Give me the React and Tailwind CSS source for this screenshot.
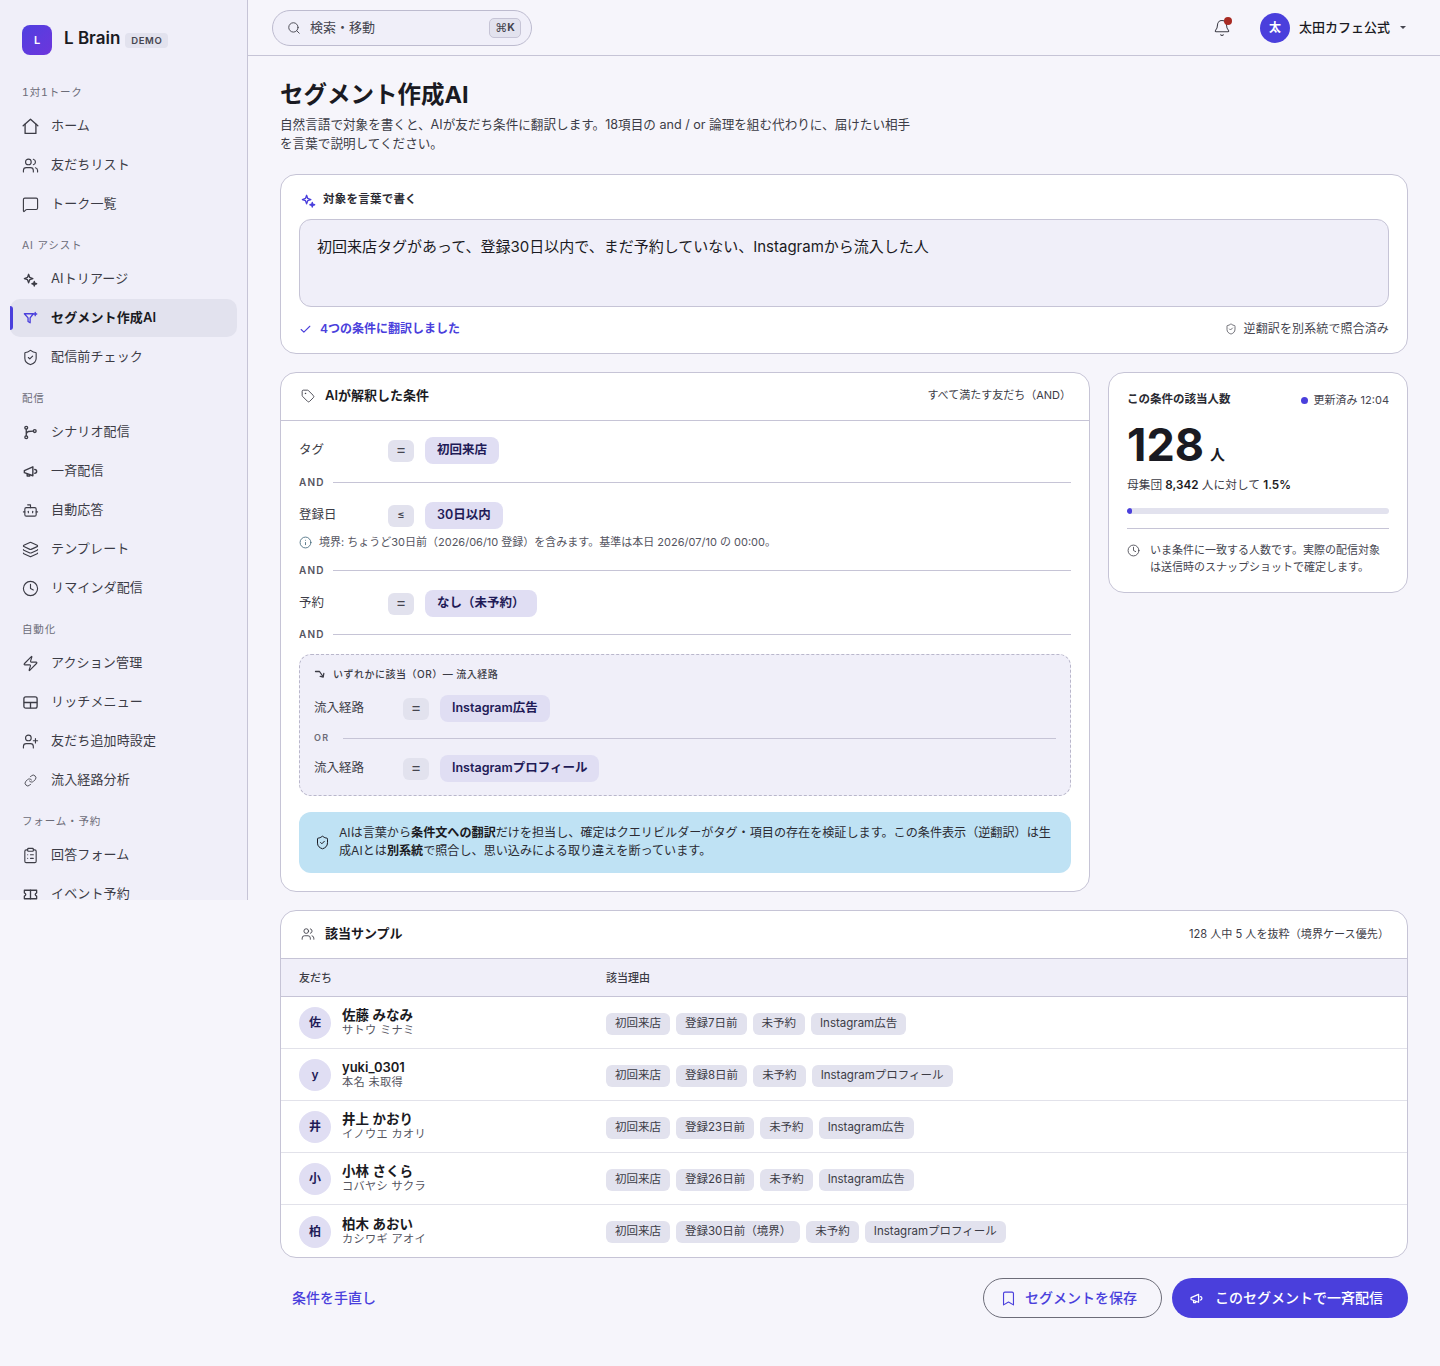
import React from 'react';
import {
  Users, MessageSquare, ShieldCheck, Bot, Layers, Clock, Zap, UserPlus, Link, ClipboardList,
  Search, Bell, Tag, Info, Check, Bookmark,
} from 'lucide-react';

const Home = ({ className }) => (
  <svg viewBox="1 1 22 22" className={className} fill="none" stroke="currentColor" strokeWidth="1.7" strokeLinecap="round" strokeLinejoin="round">
    <path d="M2.5 11 12 2.5 21.5 11" />
    <path d="M5 9V21H19V9" />
  </svg>
);

const Sparkle = ({ className }) => (
  <svg viewBox="-1 -1 18 18" className={className} fill="none" stroke="currentColor" strokeWidth="1.4" strokeLinejoin="round">
    <path d="M6 2.5 7.2 5.8 10.5 7 7.2 8.2 6 11.5 4.8 8.2 1.5 7 4.8 5.8Z" />
    <path d="M12 10 12.6 11.9 14.5 12.5 12.6 13.1 12 15 11.4 13.1 9.5 12.5 11.4 11.9Z" fill="currentColor" />
  </svg>
);

const FunnelSpark = ({ className }) => (
  <svg viewBox="-1 -1 18 18" className={className} fill="none" stroke="currentColor" strokeWidth="1.4" strokeLinejoin="round" strokeLinecap="round">
    <path d="M1.5 3H11L7.6 7.4V12.5L5.4 11.2V7.4Z" />
    <path d="M13 1.5V5M11.4 3.2H14.6" />
  </svg>
);

const Branch = ({ className }) => (
  <svg viewBox="-1 -1 18 18" className={className} fill="none" stroke="currentColor" strokeWidth="1.4" strokeLinecap="round">
    <circle cx="3.5" cy="3" r="1.5" />
    <circle cx="3.5" cy="13" r="1.5" />
    <circle cx="12.5" cy="6.5" r="1.5" />
    <path d="M3.5 4.5V11.5M11 6.5C7 6.5 3.5 6.5 3.5 10" />
  </svg>
);

const Megaphone = ({ className }) => (
  <svg viewBox="-1 -1 18 18" className={className} fill="none" stroke="currentColor" strokeWidth="1.5" strokeLinejoin="round" strokeLinecap="round">
    <path d="M1.5 7 10.5 3V12.5L1.5 9.2Z" />
    <path d="M4.5 10.3V12.8H7.2V11.4" />
    <path d="M12.5 5.8A2 2 0 0 1 12.5 9.8" />
  </svg>
);

const RichMenu = ({ className }) => (
  <svg viewBox="-1 -1 18 18" className={className} fill="none" stroke="currentColor" strokeWidth="1.4" strokeLinejoin="round">
    <rect x="1" y="2" width="14" height="12" rx="2" />
    <path d="M1 8H15M8 8V14" />
  </svg>
);

const Book = ({ className }) => (
  <svg viewBox="-1 -1 18 18" className={className} fill="none" stroke="currentColor" strokeWidth="1.4" strokeLinejoin="round" strokeLinecap="round">
    <path d="M1.5 3.5H14.5V6.2C13.5 6.6 13 7.2 13 8S13.5 9.4 14.5 9.8V12.5H1.5V9.8C2.5 9.4 3 8.8 3 8S2.5 6.6 1.5 6.2Z" />
    <path d="M8 3.5V12.5" />
  </svg>
);

const Turn = ({ className }) => (
  <svg viewBox="0 0 12 12" className={className} fill="none" stroke="currentColor" strokeWidth="1.3" strokeLinecap="round" strokeLinejoin="round">
    <path d="M1.5 3.5H5.5L9 8.5" />
    <path d="M9.8 5.5 9.2 9 6.2 8.4" />
  </svg>
);

const SmallLink = ({ className, strokeWidth }) => <Link className={`${className} p-[2px]`} strokeWidth={strokeWidth} />;

const nav = [
  { label: '1対1トーク', items: [['ホーム', Home], ['友だちリスト', Users], ['トーク一覧', MessageSquare]] },
  { label: 'AI アシスト', items: [['AIトリアージ', Sparkle], ['セグメント作成AI', FunnelSpark, true], ['配信前チェック', ShieldCheck]] },
  { label: '配信', items: [['シナリオ配信', Branch], ['一斉配信', Megaphone], ['自動応答', Bot], ['テンプレート', Layers], ['リマインダ配信', Clock]] },
  { label: '自動化', items: [['アクション管理', Zap], ['リッチメニュー', RichMenu], ['友だち追加時設定', UserPlus], ['流入経路分析', SmallLink]] },
  { label: 'フォーム・予約', items: [['回答フォーム', ClipboardList], ['イベント予約', Book]] },
];

const samples = [
  { init: '佐', name: '佐藤 みなみ', sub: 'サトウ ミナミ', tags: ['初回来店', '登録7日前', '未予約', 'Instagram広告'] },
  { init: 'y', name: 'yuki_0301', sub: '本名 未取得', tags: ['初回来店', '登録8日前', '未予約', 'Instagramプロフィール'], latin: true },
  { init: '井', name: '井上 かおり', sub: 'イノウエ カオリ', tags: ['初回来店', '登録23日前', '未予約', 'Instagram広告'] },
  { init: '小', name: '小林 さくら', sub: 'コバヤシ サクラ', tags: ['初回来店', '登録26日前', '未予約', 'Instagram広告'] },
  { init: '柏', name: '柏木 あおい', sub: 'カシワギ アオイ', tags: ['初回来店', '登録30日前（境界）', '未予約', 'Instagramプロフィール'] },
];

const Sidebar = () => (
  <aside className="w-[248px] h-[900px] shrink-0 overflow-hidden bg-[#f0eff9] border-r border-[#c6c4d6] pl-[10px] pr-[10px]">
    <div className="flex items-center h-[80px] -mb-[1px] pl-[12px]">
      <div className="w-[30px] h-[30px] rounded-lg bg-gradient-to-br from-[#4f3fe0] to-[#6d35dc] flex items-center justify-center text-white text-[11px] font-semibold">L</div>
      <span className="ml-[12px] mb-[2px] text-[17px] font-semibold text-[#1a1a22]">L Brain</span>
      <span className="ml-[5px] mt-[1px] px-[6px] h-[15px] leading-[15px] rounded bg-[#e2e2ee] text-[9.5px] font-semibold tracking-[0.06em] text-[#45454f]">DEMO</span>
    </div>
    {nav.map((sec) => (
      <div key={sec.label} className="mb-[9px]">
        <div className="h-[28px] pl-[12px] flex items-center text-[10.5px] tracking-[0.08em] tabular-nums text-[#6c6c78]">{sec.label}</div>
        <div className="flex flex-col gap-px">
          {sec.items.map(([label, Icon, active]) => (
            <div
              key={label}
              className={
                active
                  ? 'relative h-[38px] rounded-[10px] bg-[#e2e2ee] pl-[12px] w-[227px] flex items-center gap-[12px] text-[13px] font-semibold text-[#1a1a22]'
                  : 'relative h-[38px] pl-[12px] w-[227px] flex items-center gap-[12px] text-[13px] text-[#3c3c46]'
              }
            >
              {active && <span className="absolute left-0 top-[7px] w-[3px] h-[24px] rounded-r bg-[#4a3fdc]" />}
              <Icon className={active ? 'w-[17px] h-[17px] text-[#4a3fdc]' : 'w-[17px] h-[17px] text-[#3c3c46]'} strokeWidth={1.6} />
              <span className="tracking-[0.01em]">{label}</span>
            </div>
          ))}
        </div>
      </div>
    ))}
  </aside>
);

const Topbar = () => (
  <header className="h-[56px] border-b border-[#c6c4d6] flex items-center justify-between pl-[24px] pr-[34px]">
    <div className="w-[260px] h-[36px] rounded-full bg-[#f0eff9] border border-[#bdbbcf] flex items-center pl-[14px] pr-[10px]">
      <Search className="w-[14px] h-[14px] text-[#45454f]" strokeWidth={1.6} />
      <span className="ml-[9px] text-[13px] text-[#45454f]">検索・移動</span>
      <span className="ml-auto w-[32px] h-[20px] rounded-[5px] bg-[#e2e2ee] border border-[#c6c4d6] flex items-center justify-center text-[10.5px] text-[#45454f]">
        <span className="font-normal text-[12px]" style={{ fontFamily: '"DejaVu Sans", sans-serif' }}>⌘</span>
        <span className="font-bold">K</span>
      </span>
    </div>
    <div className="flex items-center">
      <div className="relative w-[20px] h-[20px] flex items-center justify-center">
        <Bell className="w-[18px] h-[18px] text-[#3c3c46]" strokeWidth={1.4} />
        <span className="absolute top-[-1px] right-0 w-[8px] h-[8px] rounded-full bg-[#a82a22]" />
      </div>
      <div className="ml-[28px] w-[30px] h-[30px] rounded-full bg-[#4a3fdc] flex items-center justify-center text-white text-[12px] font-semibold">太</div>
      <span className="ml-[9px] text-[13px] font-medium text-[#1a1a22]">太田カフェ公式</span>
      <span className="ml-[10px] w-0 h-0 border-x-[3px] border-x-transparent border-t-[3px] border-t-[#45454f]" />
    </div>
  </header>
);

const Op = ({ children }) => (
  <span className={children === '=' ? 'w-[26px] h-[22px] pb-[4px] rounded-md bg-[#e2e2ee] flex items-center justify-center text-[16px] text-[#45454f]' : 'w-[26px] h-[22px] pb-[2px] rounded-md bg-[#e2e2ee] flex items-center justify-center text-[11px] font-medium text-[#45454f]'}>{children}</span>
);

const Val = ({ children }) => (
  <span className="h-[27px] px-[12px] rounded-lg bg-[#e0def3] flex items-center text-[12.5px] font-semibold text-[#1f1b57]">{children}</span>
);

const Sep = ({ label, small }) => (
  <div className="flex items-center h-[14px]">
    <span className={small ? 'text-[9px] font-semibold tracking-[0.14em] text-[#6c6c78] w-[29px]' : 'text-[10px] font-semibold tracking-[0.12em] text-[#55555f] w-[34px]'}>{label}</span>
    <span className="flex-1 h-px bg-[#c6c4d6]" />
  </div>
);

const Cond = ({ name, op, val }) => (
  <div className="flex items-center h-[29px]">
    <span className="w-[89px] text-[12.5px] text-[#3c3c46]">{name}</span>
    <Op>{op}</Op>
    <span className="ml-[11px]"><Val>{val}</Val></span>
  </div>
);

const Conditions = () => (
  <section className="w-[810px] h-[520px] bg-white border border-[#c6c4d6] rounded-2xl overflow-hidden">
    <div className="h-[48px] border-b border-[#c6c4d6] flex items-center justify-between pl-[20px] pr-[18px]">
      <div className="flex items-center gap-[10px] pb-[2px]">
        <Tag className="w-[14px] h-[14px] text-[#3c3c46]" strokeWidth={1.5} />
        <span className="text-[13px] font-semibold text-[#1a1a22]">AIが解釈した条件</span>
      </div>
      <span className="text-[11px] pb-[2px] text-[#3c3c46]">すべて満たす友だち（AND）</span>
    </div>
    <div className="px-[18px] pt-[15px]">
      <Cond name="タグ" op="=" val="初回来店" />
      <div className="mt-[10px]"><Sep label="AND" /></div>
      <div className="mt-[12px]"><Cond name="登録日" op="≤" val="30日以内" /></div>
      <div className="mt-[5px] flex items-center gap-[7px] h-[14px] text-[11px] text-[#55555f]">
        <Info className="w-[13px] h-[13px] text-[#3d6477]" strokeWidth={1.5} />
        <span>境界: ちょうど30日前（2026/06/10 登録）を含みます。基準は本日 2026/07/10 の 00:00。</span>
      </div>
      <div className="mt-[14px]"><Sep label="AND" /></div>
      <div className="mt-[12px]"><Cond name="予約" op="=" val="なし（未予約）" /></div>
      <div className="mt-[9px]"><Sep label="AND" /></div>
      <div className="mt-[13px] h-[142px] rounded-xl border border-dashed border-[#b9b7cb] bg-[#f0eff9] px-[14px] pt-[12px]">
        <div className="flex items-center gap-[7px] h-[14px] text-[10px] font-medium tracking-[0.05em] text-[#3c3c46]">
          <Turn className="w-[12px] h-[12px]" />
          <span>いずれかに該当（OR）— 流入経路</span>
        </div>
        <div className="mt-[13px]"><Cond name="流入経路" op="=" val="Instagram広告" /></div>
        <div className="mt-[8px]"><Sep label="OR" small /></div>
        <div className="mt-[9px]"><Cond name="流入経路" op="=" val="Instagramプロフィール" /></div>
      </div>
      <div className="mt-[16px] h-[61px] rounded-xl bg-[#bfe2f4] pl-[16px] pr-[16px] flex items-center gap-[9px]">
        <ShieldCheck className="w-[15px] h-[15px] shrink-0 text-[#1a1a22]" strokeWidth={1.6} />
        <p className="text-[12.1px] leading-[18px] pb-[2px] text-[#2b2b33]">
          AIは言葉から<b className="font-semibold text-[#1a1a22]">条件文への翻訳</b>だけを担当し、確定はクエリビルダーがタグ・項目の存在を検証します。この条件表示（逆翻訳）は生成AIとは<b className="font-semibold text-[#1a1a22]">別系統</b>で照合し、思い込みによる取り違えを断っています。
        </p>
      </div>
    </div>
  </section>
);

const Count = () => (
  <aside className="w-[300px] h-[221px] bg-white border border-[#c6c4d6] rounded-2xl px-[18px] pt-[19px]">
    <div className="flex items-center justify-between h-[16px]">
      <span className="text-[11.5px] font-semibold text-[#2b2b33]">この条件の該当人数</span>
      <span className="flex items-center text-[11px] text-[#45454f]">
        <span className="w-[7px] h-[7px] rounded-full bg-[#4a3fdc] mr-[6px]" />
        更新済み 12:04
      </span>
    </div>
    <div className="mt-[14px] flex items-end h-[46px]">
      <span className="text-[45px] leading-[46px] font-bold text-[#1a1a22]">128</span>
      <span className="ml-[6px] mb-[2px] text-[15px] font-semibold text-[#1a1a22]">人</span>
    </div>
    <p className="mt-[9px] text-[11.7px] text-[#3c3c46] h-[16px] leading-[16px]">
      母集団 <b className="font-semibold text-[#1a1a22]">8,342</b> 人に対して <b className="font-semibold text-[#1a1a22]">1.5%</b>
    </p>
    <div className="mt-[15px] h-[6px] rounded-full bg-[#e2e2ee] overflow-hidden">
      <div className="h-full rounded-full bg-[#4a3fdc]" style={{ width: '1.5%', minWidth: 5 }} />
    </div>
    <div className="mt-[14px] border-t border-[#c6c4d6] pt-[13px] flex gap-[10px]">
      <Clock className="w-[13px] h-[13px] mt-[2px] shrink-0 text-[#3c3c46]" strokeWidth={1.5} />
      <p className="text-[11px] leading-[17px] text-[#45454f]">いま条件に一致する人数です。実際の配信対象は送信時のスナップショットで確定します。</p>
    </div>
  </aside>
);

const Samples = () => (
  <section className="mt-[18px] bg-white border border-[#c6c4d6] rounded-2xl overflow-hidden">
    <div className="h-[47px] flex items-center justify-between pl-[20px] pr-[18px]">
      <div className="flex items-center gap-[10px] pb-[1px]">
        <Users className="w-[14px] h-[14px] text-[#3c3c46]" strokeWidth={1.5} />
        <span className="text-[13px] font-semibold text-[#1a1a22]">該当サンプル</span>
      </div>
      <span className="text-[11.1px] pb-[1px] text-[#3c3c46]">128 人中 5 人を抜粋（境界ケース優先）</span>
    </div>
    <div className="h-[39px] pt-[2px] bg-[#f0eff9] border-y border-[#c6c4d6] flex items-center pl-[18px] text-[11px] font-medium text-[#3c3c46]">
      <span className="w-[307px]">友だち</span>
      <span>該当理由</span>
    </div>
    {samples.map((s, i) => (
      <div key={s.name} className={i < 4 ? 'h-[52px] border-b border-[#e2e2ea] flex items-center pl-[18px]' : 'h-[52px] flex items-center pl-[18px]'}>
        <div className="w-[307px] flex items-center">
          <span className="mt-[1px] w-[32px] h-[32px] rounded-full bg-[#e0def3] flex items-center justify-center text-[12px] font-semibold text-[#1f1b57]">{s.init}</span>
          <div className="ml-[11px] mt-[1px]">
            <div className={s.latin ? 'text-[13px] leading-[15px] font-semibold text-[#1a1a22]' : 'text-[13.5px] leading-[15px] font-semibold text-[#1a1a22]'}>{s.name}</div>
            <div className="text-[11.2px] leading-[15px] tracking-[0.03em] text-[#55555f]">{s.sub}</div>
          </div>
        </div>
        <div className="mt-[2px] flex items-center gap-[6px]">
          {s.tags.map((t) => (
            <span key={t} className="h-[22px] px-[9px] rounded-md bg-[#e2e2ee] flex items-center text-[11.5px] text-[#3c3c46]">{t}</span>
          ))}
        </div>
      </div>
    ))}
  </section>
);

export default function App() {
  return (
    <div className="min-h-screen bg-[#f6f5fb] flex items-start" style={{ fontFamily: 'Inter, "Noto Sans CJK JP", sans-serif' }}>
      <Sidebar />
      <div className="flex-1 min-w-0">
        <Topbar />
        <main className="px-[32px] pt-[22px] pb-[48px]">
          <h1 className="text-[23.5px] leading-[34px] font-bold text-[#1a1a22]">セグメント作成AI</h1>
          <p className="mt-[3px] w-[632px] text-[12.6px] leading-[19px] text-[#3c3c46]">
            自然言語で対象を書くと、AIが友だち条件に翻訳します。18項目の and / or 論理を組む代わりに、届けたい相手を言葉で説明してください。
          </p>
          <section className="mt-[21px] h-[180px] bg-white border border-[#c6c4d6] rounded-2xl px-[18px] pt-[17px]">
            <div className="flex items-center gap-[6px] h-[16px] pl-[1px] text-[#4a3fdc]">
              <Sparkle className="w-[17px] h-[17px]" />
              <span className="text-[11.5px] font-semibold tracking-[0.02em] text-[#2b2b33]">対象を言葉で書く</span>
            </div>
            <div className="mt-[11px] h-[88px] rounded-xl bg-[#f0eff9] border border-[#c6c4d6] px-[17px] pt-[16px] text-[15px] leading-[22px] text-[#1a1a22]">
              初回来店タグがあって、登録30日以内で、まだ予約していない、Instagramから流入した人
            </div>
            <div className="mt-[13px] flex items-center justify-between h-[18px]">
              <span className="flex items-center gap-[8px] text-[12px] font-semibold text-[#4a3fdc]">
                <Check className="w-[13px] h-[13px]" strokeWidth={2} />
                4つの条件に翻訳しました
              </span>
              <span className="flex items-center gap-[7px] text-[12px] tracking-[0.01em] text-[#45454f]">
                <ShieldCheck className="w-[12px] h-[12px]" strokeWidth={1.5} />
                逆翻訳を別系統で照合済み
              </span>
            </div>
          </section>
          <div className="mt-[18px] flex items-start gap-[18px]">
            <Conditions />
            <Count />
          </div>
          <Samples />
          <div className="mt-[20px] flex items-center justify-between pl-[12px]">
            <span className="pb-[2px] text-[14px] font-medium text-[#4a3fdc]">条件を手直し</span>
            <div className="flex items-center gap-[10px]">
              <button className="h-[40px] w-[179px] rounded-full border border-[#6c6c78] pl-[16px] flex items-center gap-[8px] text-[14px] font-medium text-[#4a3fdc]">
                <Bookmark className="w-[17px] h-[17px]" strokeWidth={1.6} />
                <span className="pb-[2px]">セグメントを保存</span>
              </button>
              <button className="h-[40px] w-[236px] rounded-full bg-[#4a3fdc] pl-[17px] flex items-center gap-[11px] text-[14px] font-medium text-white">
                <Megaphone className="w-[15px] h-[15px]" />
                <span className="pb-[2px]">このセグメントで一斉配信</span>
              </button>
            </div>
          </div>
        </main>
      </div>
    </div>
  );
}
